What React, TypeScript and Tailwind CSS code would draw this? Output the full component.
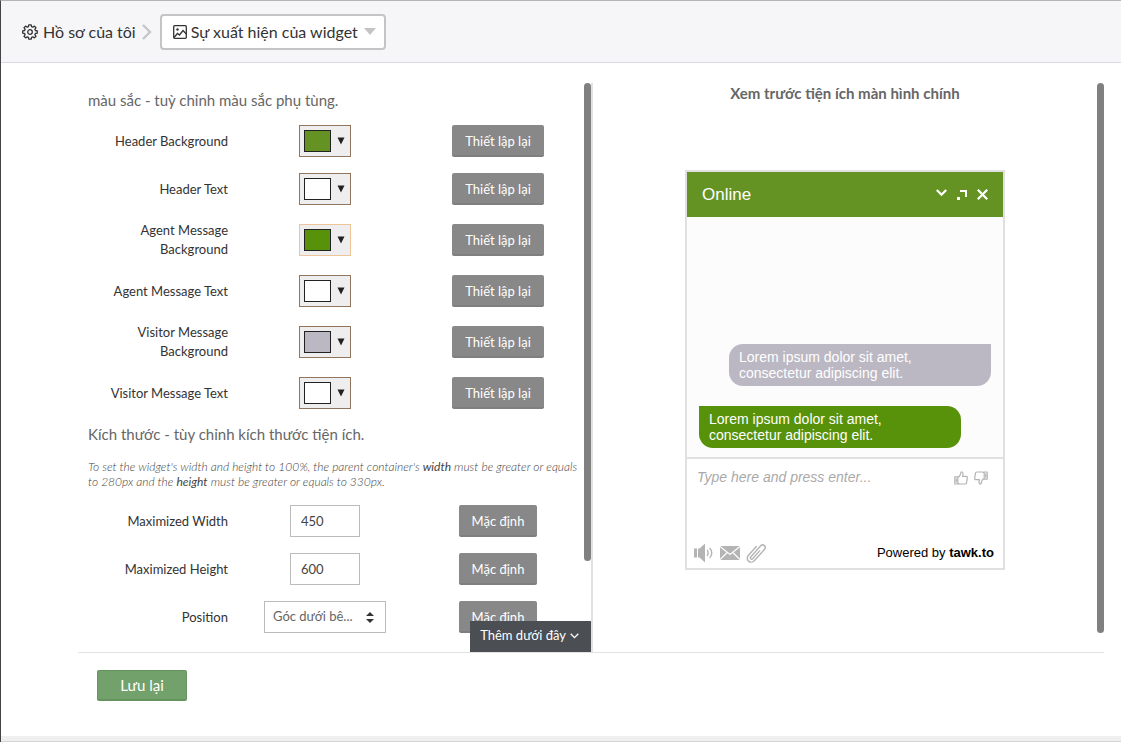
import React from 'react';

type ColorSetting = { id: string; label: string; swatch: string; border: string };

const colorSettings: ColorSetting[] = [
  { id: 'header-bg', label: 'Header Background', swatch: 'bg-[#659323]', border: 'border-[#91765d]' },
  { id: 'header-text', label: 'Header Text', swatch: 'bg-white', border: 'border-[#91765d]' },
  { id: 'agent-bg', label: 'Agent Message Background', swatch: 'bg-[#58920b]', border: 'border-[#f0c49b]' },
  { id: 'agent-text', label: 'Agent Message Text', swatch: 'bg-white', border: 'border-[#91765d]' },
  { id: 'visitor-bg', label: 'Visitor Message Background', swatch: 'bg-[#bbb8c3]', border: 'border-[#91765d]' },
  { id: 'visitor-text', label: 'Visitor Message Text', swatch: 'bg-white', border: 'border-[#91765d]' },
];

const rowClass = 'grid grid-cols-[140fr_194fr_152fr] items-center justify-items-center';
const labelClass = 'justify-self-end text-right text-[13px] leading-[19px] text-[#333]';

function GreyButton({ children }: { children: React.ReactNode }) {
  return (
    <button
      type="button"
      className="h-8 rounded-xs border-b-2 border-[#7f7f7f] bg-[#888] px-[13px] pt-0.5 text-[13px] leading-[19px] whitespace-nowrap text-white"
    >
      {children}
    </button>
  );
}

function GearIcon() {
  return (
    <svg width="16" height="16" viewBox="0 0 16 16" fill="none" stroke="#333" strokeWidth="1.3" strokeLinejoin="round">
      <path d="M6.8 .8h2.4l.4 1.9 1.1.5 1.7-1.1 1.6 1.6-1.1 1.7.5 1.1 1.9.4v2.2l-1.9.4-.5 1.1 1.1 1.7-1.6 1.6-1.7-1.1-1.1.5-.4 1.9H6.8l-.4-1.9-1.1-.5-1.7 1.1L2 12.3l1.1-1.7-.5-1.1-1.9-.4V6.9l1.9-.4.5-1.1L2 3.700l1.600-1.600 1.700 1.100 1.100-.5z" />
      <circle cx="8" cy="8" r="2.300" />
    </svg>
  );
}

function PictureIcon() {
  return (
    <svg width="14" height="14" viewBox="0 0 14 14" fill="none" stroke="#333" strokeWidth="1.300">
      <rect x=".7" y=".7" width="12.600" height="12.600" rx="1" />
      <circle cx="4.500" cy="4.500" r="1.200" fill="#333" stroke="none" />
      <path d="M1 12.500 4.500 8.500l2 1.500 3.500-4.500 3.300 3.500" />
    </svg>
  );
}

function TopBar() {
  return (
    <header className="flex h-[62px] shrink-0 items-center border-b border-[#dadae4] bg-[#f6f6f9] pl-[21px] text-[16px] text-[#333]">
      <a href="#profile" className="flex items-center gap-[5px] leading-5">
        <GearIcon />
        Hồ sơ của tôi
      </a>
      <svg className="ml-1.5 mr-2" width="10" height="16" viewBox="0 0 10 16" fill="none" stroke="#c4c4c4" strokeWidth="2.200">
        <path d="M1 1l7 7-7 7" />
      </svg>
      <button
        type="button"
        aria-haspopup="listbox"
        className="flex h-9 items-center rounded-sm border-2 border-[#c4c4c4] bg-white pr-2 pl-[11px] leading-5"
      >
        <PictureIcon />
        <span className="ml-1">Sự xuất hiện của widget</span>
        <svg className="ml-1.5" width="12" height="7" viewBox="0 0 12 7">
          <path d="M0 0h12L6 7z" fill="#c4c4c4" />
        </svg>
      </button>
    </header>
  );
}

function ColorRow({ setting }: { setting: ColorSetting }) {
  return (
    <div className={rowClass}>
      <label htmlFor={setting.id} className={labelClass}>
        {setting.label}
      </label>
      <button
        id={setting.id}
        type="button"
        className={'flex h-8 w-[52px] items-center gap-1.5 border bg-[#eee] pl-1 ' + setting.border}
      >
        <span className={'h-[22px] w-[27px] border border-[#222] ' + setting.swatch} />
        <svg width="8" height="8" viewBox="0 0 8 8">
          <path d="M.5 .5h7L4 7.500z" fill="#222" />
        </svg>
      </button>
      <GreyButton>Thiết lập lại</GreyButton>
    </div>
  );
}

function SizeRow({ id, label, value }: { id: string; label: string; value: string }) {
  return (
    <div className={rowClass}>
      <label htmlFor={id} className={labelClass}>
        {label}
      </label>
      <input
        id={id}
        type="text"
        defaultValue={value}
        className="h-8 w-[70px] border border-[#bbb] bg-white px-2.5 text-[13px] text-[#444]"
      />
      <GreyButton>Mặc định</GreyButton>
    </div>
  );
}

function SettingsPanel() {
  return (
    <section className="relative flex min-w-0 flex-[515]">
      <div className="min-w-0 flex-1 overflow-hidden px-2.5 pt-[7px]">
        <h2 className="mb-[15px] text-[15px] leading-5 text-[#666]">màu sắc - tuỳ chỉnh màu sắc phụ tùng.</h2>
        <div className="flex flex-col gap-4">
          {colorSettings.map((s) => (
            <ColorRow key={s.id} setting={s} />
          ))}
        </div>
        <h2 className="my-[15px] text-[15px] leading-5 text-[#666]">Kích thước - tùy chỉnh kích thước tiện ích.</h2>
        <p className="-mr-2 mb-4 text-[12px] leading-[15px] font-light text-[#444] italic">
          To set the widget's width and height to 100%, the parent container's <b>width</b> must be greater or equals
          <br />
          to 280px and the <b>height</b> must be greater or equals to 330px.
        </p>
        <div className="flex flex-col gap-4">
          <SizeRow id="max-width" label="Maximized Width" value="450" />
          <SizeRow id="max-height" label="Maximized Height" value="600" />
          <div className={rowClass}>
            <label htmlFor="position" className={labelClass}>
              Position
            </label>
            <div className="relative">
              <select
                id="position"
                className="h-8 w-[122px] appearance-none border border-[#bbb] bg-white pr-6 pl-2 text-[13px] text-[#666]"
              >
                <option>Góc dưới bê...</option>
              </select>
              <svg className="pointer-events-none absolute top-[11px] right-3" width="8" height="11" viewBox="0 0 8 11" fill="#333">
                <path d="M4 0l4 4H0zM0 7h8l-4 4z" />
              </svg>
            </div>
            <GreyButton>Mặc định</GreyButton>
          </div>
        </div>
      </div>
      <div className="w-[7px]">
        <div className="h-[84%] rounded-full bg-[#808080]" />
      </div>
      <div className="w-0.5 bg-[#e2e2e2]" />
      <button
        type="button"
        className="absolute right-0.5 bottom-0 flex h-[31px] items-center gap-1 bg-[#4b4e53] pr-3 pb-0.5 pl-2.5 text-[13px] whitespace-nowrap text-white"
      >
        Thêm dưới đây
        <svg width="9" height="6" viewBox="0 0 9 6" fill="none" stroke="white" strokeWidth="1.300">
          <path d="M.7 .8l3.800 3.800L8.300 .8" />
        </svg>
      </button>
    </section>
  );
}

function ThumbIcon({ className }: { className?: string }) {
  return (
    <svg className={className} width="14" height="14" viewBox="0 0 14 14" fill="none" stroke="#b4b4b4" strokeWidth="1.200" strokeLinejoin="round">
      <path d="M.8 5.800h3v7.200h-3zM3.800 6.500c1.800-.7 2.700-2.200 3-4.700.2-1.300 2.200-1.200 2.200.8 0 1-.2 1.800-.5 2.700h3.600c.9 0 1.300.6 1.200 1.300l-.7 5c-.1.900-.7 1.400-1.500 1.400H6c-.8 0-1.300-.3-2.200-.6M2.300 7.500v4" />
    </svg>
  );
}

function ChatPreview() {
  return (
    <div className="mt-[66px] flex h-[400px] w-80 flex-col border-2 border-[#e0e0e0] bg-white font-['Liberation_Sans',sans-serif]">
      <div className="flex h-[45px] items-center bg-[#659323] px-[15px] text-white">
        <span className="flex-1 text-[17px]">Online</span>
        <div className="flex items-center gap-2.5">
          <button type="button" aria-label="Minimize" className="pb-1">
            <svg width="11" height="8" viewBox="0 0 11 8" fill="none" stroke="white" strokeWidth="2.200">
              <path d="M.8 1l4.700 4.700L10.200 1" />
            </svg>
          </button>
          <button type="button" aria-label="Pop out">
            <svg width="10" height="10" viewBox="0 0 10 10" fill="white">
              <path d="M3 0h7v7H8V2H3zM0 7h3v3H0z" />
            </svg>
          </button>
          <button type="button" aria-label="Close">
            <svg width="11" height="11" viewBox="0 0 11 11" fill="none" stroke="white" strokeWidth="2.200">
              <path d="M.8 .8l9.400 9.400M10.200 .8L.8 10.200" />
            </svg>
          </button>
        </div>
      </div>
      <div className="flex flex-1 flex-col justify-end gap-5 border-b-2 border-[#e0e0e0] bg-[#fcfcfc] px-3 pb-[9px] text-[14px] leading-4 text-white">
        <p className="w-[262px] self-end rounded-[14px] rounded-tr-none bg-[#bbb8c3] px-2.5 py-[5px]">
          Lorem ipsum dolor sit amet, consectetur adipiscing elit.
        </p>
        <p className="w-[262px] rounded-[14px] rounded-tl-none bg-[#58920b] px-2.5 py-[5px]">
          Lorem ipsum dolor sit amet, consectetur adipiscing elit.
        </p>
      </div>
      <div className="flex h-[109px] flex-col justify-between pt-2.5 pr-[9px] pb-1 pl-[7px]">
        <div className="flex items-start">
          <textarea
            aria-label="Message"
            placeholder="Type here and press enter..."
            className="h-12 min-w-0 flex-1 resize-none pl-[3px] text-[14px] leading-4 italic placeholder:text-[#aaa]"
          />
          <div className="flex gap-1.5 pt-0.5 pr-1.5">
            <button type="button" aria-label="Like">
              <ThumbIcon />
            </button>
            <button type="button" aria-label="Dislike">
              <ThumbIcon className="rotate-180" />
            </button>
          </div>
        </div>
        <div className="flex items-center">
          <div className="flex flex-1 items-center gap-1.5">
            <button type="button" aria-label="Sound">
              <svg width="20" height="20" viewBox="0 0 20 20" fill="#b4b4b4">
                <path d="M0 5.500h3v9H0zM4 5.500h1.500L11 .5v19l-5.500-5H4z" />
                <path d="M13 7c1.500 1.500 1.500 4.500 0 6M15.500 5c3 2.500 3 7.500 0 10" fill="none" stroke="#b4b4b4" strokeWidth="1.400" />
              </svg>
            </button>
            <button type="button" aria-label="Email">
              <svg width="20" height="14" viewBox="0 0 20 14">
                <path d="M0 0h20v14H0z" fill="#b4b4b4" />
                <path d="M0 .5l10 8 10-8M0 13.500l7.200-7M20 13.500l-7.200-7" fill="none" stroke="white" strokeWidth="1.200" />
              </svg>
            </button>
            <button type="button" aria-label="Attach file">
              <svg width="20" height="22" viewBox="0 0 20 22" fill="none" stroke="#b4b4b4" strokeWidth="1.400" strokeLinecap="round">
                <path
                  transform="translate(10 11) rotate(42)"
                  d="M1.300-4V6.500a1.300 1.300 0 0 1-2.600 0V-8.500a2.600 2.600 0 0 1 5.200 0V7a4 4 0 0 1-8 0V-5"
                />
              </svg>
            </button>
          </div>
          <span className="text-[13px] text-black">
            Powered by <b>tawk.to</b>
          </span>
        </div>
      </div>
    </div>
  );
}

export default function App() {
  return (
    <div className="flex h-screen min-h-[600px] flex-col border-t border-l border-t-[#b4b4b4] border-l-[#444] bg-white font-['Lato','Noto_Sans',sans-serif]">
      <TopBar />
      <main className="flex min-h-0 flex-1 flex-col pt-5 pr-[17px] pl-[77px]">
        <div className="flex min-h-0 flex-1 border-b border-[#e2e2e2]">
          <SettingsPanel />
          <section className="flex min-w-0 flex-[511]">
            <div className="flex flex-1 flex-col items-center">
              <h2 className="text-[15px] leading-[21px] font-bold text-[#666]">Xem trước tiện ích màn hình chính</h2>
              <ChatPreview />
            </div>
            <div className="w-[7px]">
              <div className="h-[550px] max-h-full rounded-full bg-[#808080]" />
            </div>
          </section>
        </div>
        <div className="flex h-[83px] shrink-0 items-start pt-[17px] pl-[19px]">
          <button
            type="button"
            className="h-[31px] w-[90px] rounded-xs border border-b-2 border-[#66945f] bg-[#73a16c] text-[15px] text-white"
          >
            Lưu lại
          </button>
        </div>
      </main>
      <footer className="h-1.5 shrink-0 border-b border-[#d4d4d4] bg-[#efefef]" />
    </div>
  );
}
